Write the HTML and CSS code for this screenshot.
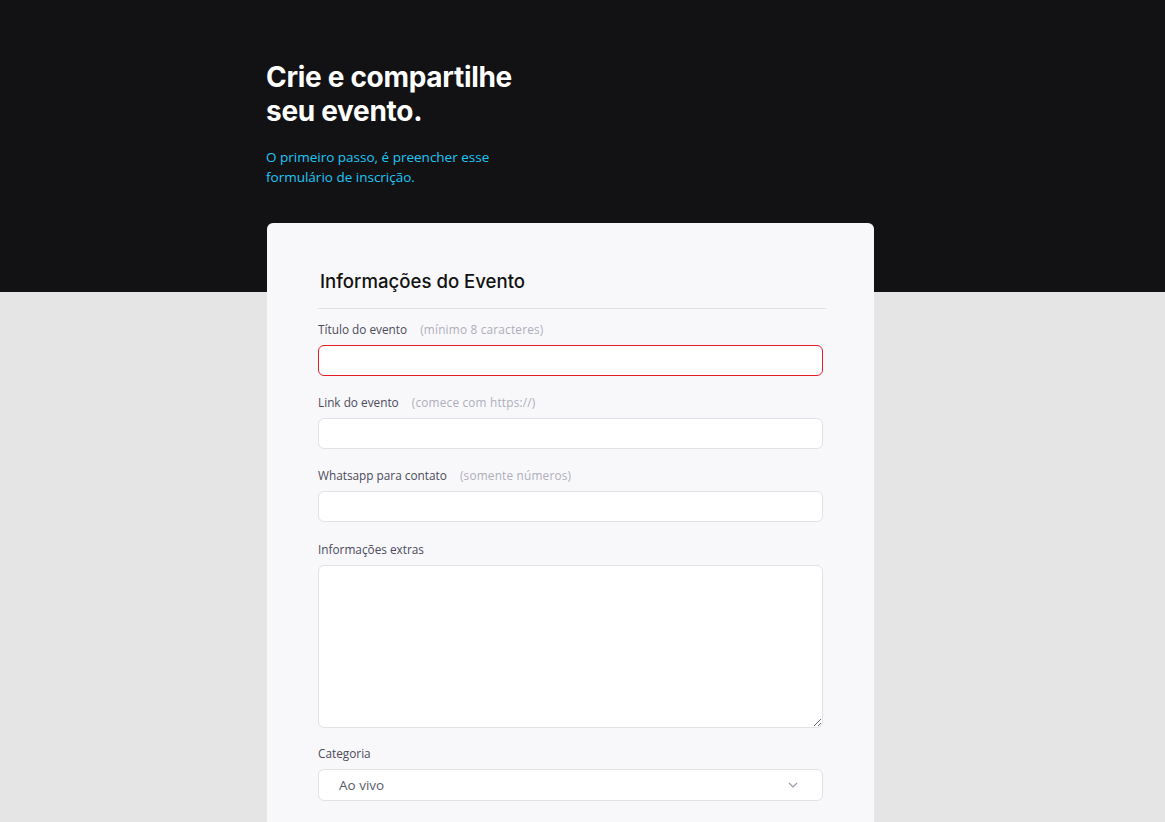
FILE: index.html
```html
<!DOCTYPE html>
<html lang="pt-BR">
<head>
<meta charset="utf-8">
<title>Crie e compartilhe seu evento</title>
<link rel="stylesheet" href="styles.css">
</head>
<body>
<div class="container">
  <header class="hero">
    <h1 class="hero-title">Crie e compartilhe<br>seu evento.</h1>
    <p class="hero-sub">O primeiro passo, é preencher esse<br>formulário de inscrição.</p>
  </header>
  <form class="card">
    <h2 class="card-title">Informações do Evento</h2>
    <div class="field">
      <label class="label">Título do evento <span class="hint">(mínimo 8 caracteres)</span></label>
      <input class="input input-error" type="text">
    </div>
    <div class="field">
      <label class="label">Link do evento <span class="hint">(comece com https://)</span></label>
      <input class="input" type="text">
    </div>
    <div class="field">
      <label class="label">Whatsapp para contato <span class="hint">(somente números)</span></label>
      <input class="input" type="text">
    </div>
    <div class="field field-extra">
      <label class="label">Informações extras</label>
      <textarea class="input textarea"></textarea>
    </div>
    <div class="field field-category">
      <label class="label">Categoria</label>
      <div class="select-wrap">
        <select class="input select">
          <option>Ao vivo</option>
          <option>Online</option>
        </select>
        <svg class="chevron" width="10" height="6" viewBox="0 0 10 6"><path d="M1 1l4 4 4-4" fill="none" stroke="#9a9aa6" stroke-width="1.2"/></svg>
      </div>
    </div>
  </form>
</div>
</body>
</html>
```
FILE: styles.css
```css
* { box-sizing: border-box; }
body {
  margin: 0;
  background: linear-gradient(#121214 0, #121214 292px, #e5e5e5 292px);
  min-height: 822px;
  font-family: "Open Sans", "Liberation Sans", sans-serif;
}
.container {
  width: 631px;
  margin: 0 auto;
}
.hero {
  padding-top: 60px;
  padding-bottom: 36px;
  margin-left: -1px;
}
.hero-title {
  margin: 0;
  font-family: Inter, "Open Sans", sans-serif;
  font-weight: 700;
  font-size: 28px;
  line-height: 34px;
  color: #fff;
  letter-spacing: -0.3px;
}
.hero-sub {
  margin: 19px 0 0;
  font-size: 13.5px;
  line-height: 20px;
  color: #1ec8f5;
}
.card {
  width: 607px;
  background: #f8f8fa;
  border-radius: 6px;
  padding: 47px 51px 30px;
  display: flex;
  flex-direction: column;
}
.card-title {
  margin: 0 -3px 0 0;
  font-family: Inter, "Liberation Sans", Arial, sans-serif;
  font-weight: 500;
  font-size: 18.6px;
  line-height: 22px;
  color: #111;
  padding: 0 0 16px 2px;
  border-bottom: 1px solid #e1e1e6;
}
.field {
  display: flex;
  flex-direction: column;
  margin-top: 11px;
}
.field + .field { margin-top: 17px; }
.field + .field-extra { margin-top: 18px; }
.field + .field-category { margin-top: 16px; }
.label {
  font-size: 11.8px;
  line-height: 18px;
  color: #4b4b5a;
  margin-bottom: 7px;
}
.hint {
  color: #aeaebb;
  margin-left: 10px;
  letter-spacing: 0.2px;
}
.input {
  display: block;
  width: 100%;
  height: 31px;
  border: 1px solid #e1e1e6;
  border-radius: 6px;
  background: #fff;
  font-family: inherit;
  font-size: 13.5px;
  outline: none;
}
.input-error { border-color: #e51c23; }
.textarea {
  height: 163px;
  resize: vertical;
}
.select-wrap { position: relative; }
.select {
  appearance: none;
  -webkit-appearance: none;
  height: 32px;
  padding: 0 20px;
  color: #5a5a66;
}
.chevron {
  position: absolute;
  right: 25px;
  top: 13px;
  pointer-events: none;
}
```
